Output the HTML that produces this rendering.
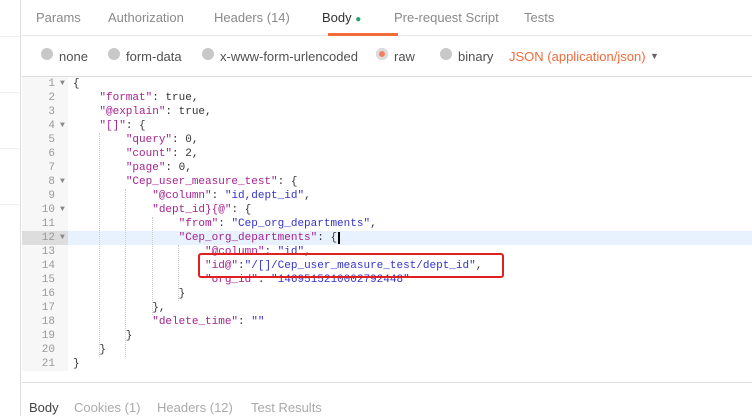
<!DOCTYPE html>
<html><head><meta charset="utf-8"><style>
*{margin:0;padding:0;box-sizing:border-box}
body{width:752px;height:416px;overflow:hidden;background:#fff;font-family:"Liberation Sans",sans-serif;position:relative}
.side{position:absolute;left:0;top:0;width:21px;height:416px;background:#fff;border-right:1px solid #ddd}
.side i{position:absolute;left:0;width:20px;height:1px;background:#eee}
.tabs{position:absolute;left:22px;top:0;right:0;height:36px;border-bottom:1px solid #e6e6e6}
.tabs span{position:absolute;top:10px;font-size:13px;color:#8a8a8a}
.g{color:#26a271}
.ul{position:absolute;left:306px;top:33px;width:70px;height:3px;background:#f26b3a}
.radios{position:absolute;left:22px;top:36px;right:0;height:41px;border-bottom:1px solid #ddd}
.radios span{position:absolute;top:13px;font-size:13px;color:#505050}
.radios b{position:absolute;top:12px;width:12px;height:12px;border-radius:50%;background:#c8c8c8}
.code{position:absolute;left:22px;top:77px;right:0;height:294px;font-family:"Liberation Mono",monospace;font-size:11px}
.gut{position:absolute;left:0;top:0;width:46px;height:294px;background:#f7f7f7}
.ln{position:absolute;left:0;height:14px;line-height:14px;width:46px;color:#999}
.ln .n{position:absolute;right:13px}
.ln .a{position:absolute;left:38px;font-size:8px;color:#888}
.l{position:absolute;left:51px;height:14px;line-height:14px;white-space:pre;color:#333}
.k{color:#a3238e}.s{color:#3333cc}.v{color:#333}
.hl{position:absolute;left:46px;right:0;top:154px;height:14px;background:#e8f2ff}
.hlg{position:absolute;left:0;width:46px;top:154px;height:14px;background:#ddd}
.gd{position:absolute;width:0;border-left:1px dotted #ccc}
.box{position:absolute;left:198px;top:253px;width:306px;height:25px;border:2.5px solid #e02020;border-radius:3px}
.bot{position:absolute;left:22px;top:382px;right:0;height:34px;border-top:1px solid #ddd}
.bot span{position:absolute;top:17px;font-size:13px;color:#aaa}
</style></head><body>
<div class="side"><i style="top:36px"></i><i style="top:92px"></i><i style="top:148px"></i><i style="top:204px"></i></div>
<div class="tabs">
<span style="left:14px">Params</span>
<span style="left:86px">Authorization</span>
<span style="left:192px">Headers <span class="g" style="position:static">(14)</span></span>
<span style="left:300px;color:#333">Body <span style="position:static;color:#26a271;font-size:10px">●</span></span>
<span style="left:372px">Pre-request Script</span>
<span style="left:502px">Tests</span>
<div class="ul"></div>
</div>
<div class="radios">
<b style="left:19px"></b><span style="left:37px">none</span>
<b style="left:86px"></b><span style="left:104px">form-data</span>
<b style="left:180px"></b><span style="left:198px">x-www-form-urlencoded</span>
<b style="left:354px;background:#f08060;box-shadow:inset 0 0 0 3px #ddd"></b><span style="left:372px">raw</span>
<b style="left:418px"></b><span style="left:436px">binary</span>
<span style="left:487px;color:#f26b3a">JSON (application/json)</span>
<span style="left:628px;font-size:9px;color:#666;top:15px">▼</span>
</div>
<div class="code">
<div class="gut"></div>
<div class="hl"></div><div class="hlg"></div>
<div class="gd" style="left:77px;top:56px;height:224px"></div>
<div class="gd" style="left:103px;top:112px;height:168px"></div>
<div class="gd" style="left:130px;top:140px;height:98px"></div>
<div class="gd" style="left:156px;top:168px;height:56px"></div>
<div class="ln" style="top:0"><span class="n">1</span><span class="a">▼</span></div>
<div class="ln" style="top:14px"><span class="n">2</span></div>
<div class="ln" style="top:28px"><span class="n">3</span></div>
<div class="ln" style="top:42px"><span class="n">4</span><span class="a">▼</span></div>
<div class="ln" style="top:56px"><span class="n">5</span></div>
<div class="ln" style="top:70px"><span class="n">6</span></div>
<div class="ln" style="top:84px"><span class="n">7</span></div>
<div class="ln" style="top:98px"><span class="n">8</span><span class="a">▼</span></div>
<div class="ln" style="top:112px"><span class="n">9</span></div>
<div class="ln" style="top:126px"><span class="n">10</span><span class="a">▼</span></div>
<div class="ln" style="top:140px"><span class="n">11</span></div>
<div class="ln" style="top:154px"><span class="n">12</span><span class="a">▼</span></div>
<div class="ln" style="top:168px"><span class="n">13</span></div>
<div class="ln" style="top:182px"><span class="n">14</span></div>
<div class="ln" style="top:196px"><span class="n">15</span></div>
<div class="ln" style="top:210px"><span class="n">16</span></div>
<div class="ln" style="top:224px"><span class="n">17</span></div>
<div class="ln" style="top:238px"><span class="n">18</span></div>
<div class="ln" style="top:252px"><span class="n">19</span></div>
<div class="ln" style="top:266px"><span class="n">20</span></div>
<div class="ln" style="top:280px"><span class="n">21</span></div>
<div class="l" style="top:0">{</div>
<div class="l" style="top:14px">    <span class="k">"format"</span>: true,</div>
<div class="l" style="top:28px">    <span class="k">"@explain"</span>: true,</div>
<div class="l" style="top:42px">    <span class="k">"[]"</span>: {</div>
<div class="l" style="top:56px">        <span class="k">"query"</span>: 0,</div>
<div class="l" style="top:70px">        <span class="k">"count"</span>: 2,</div>
<div class="l" style="top:84px">        <span class="k">"page"</span>: 0,</div>
<div class="l" style="top:98px">        <span class="k">"Cep_user_measure_test"</span>: {</div>
<div class="l" style="top:112px">            <span class="k">"@column"</span>: <span class="s">"id,dept_id"</span>,</div>
<div class="l" style="top:126px">            <span class="k">"dept_id}{@"</span>: {</div>
<div class="l" style="top:140px">                <span class="k">"from"</span>: <span class="s">"Cep_org_departments"</span>,</div>
<div class="l" style="top:154px">                <span class="k">"Cep_org_departments"</span>: {<span style="border-left:2px solid #000;margin-left:1px"></span></div>
<div class="l" style="top:168px">                    <span class="k">"@column"</span>: <span class="s">"id"</span>,</div>
<div class="l" style="top:182px">                    <span class="k">"id@"</span>:<span class="s">"/[]/Cep_user_measure_test/dept_id"</span>,</div>
<div class="l" style="top:196px">                    <span class="k">"org_id"</span>: <span class="s">"1469515210002792448"</span></div>
<div class="l" style="top:210px">                }</div>
<div class="l" style="top:224px">            },</div>
<div class="l" style="top:238px">            <span class="k">"delete_time"</span>: <span class="s">""</span></div>
<div class="l" style="top:252px">        }</div>
<div class="l" style="top:266px">    }</div>
<div class="l" style="top:280px">}</div>
</div>
<div class="box"></div>
<div class="bot">
<span style="left:7px;color:#444">Body</span>
<span style="left:52px">Cookies <span class="g" style="position:static">(1)</span></span>
<span style="left:135px">Headers <span class="g" style="position:static">(12)</span></span>
<span style="left:229px">Test Results</span>
</div>
</body></html>
